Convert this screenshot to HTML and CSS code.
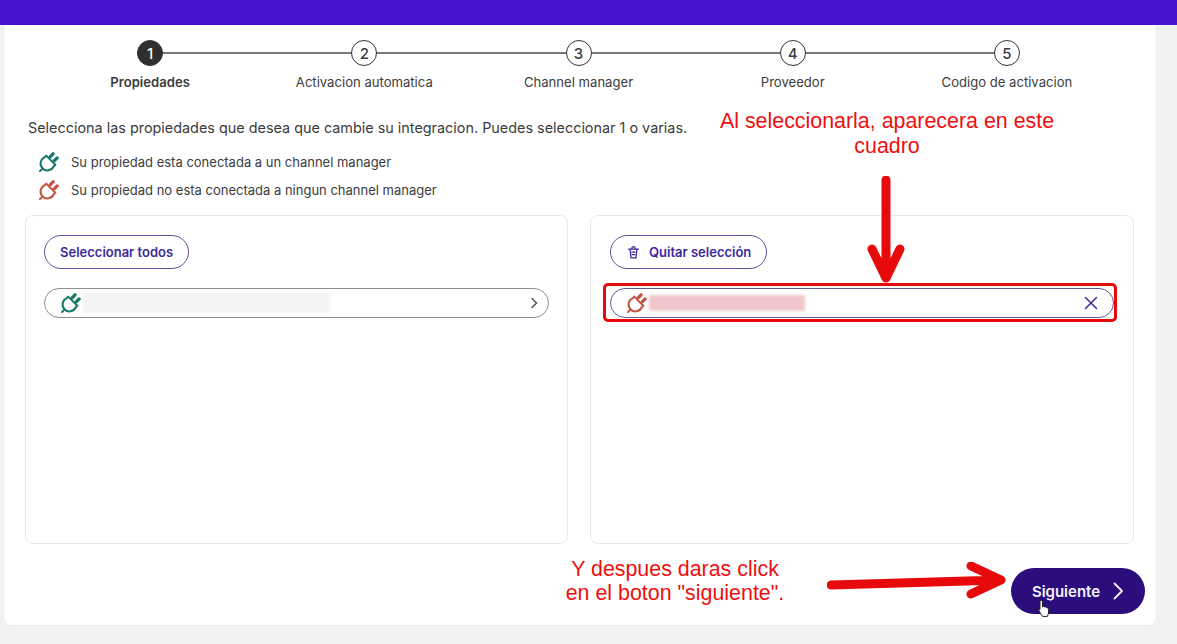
FILE: index.html
```html
<!DOCTYPE html>
<html lang="es">
<head>
<meta charset="utf-8">
<title>Propiedades</title>
<link rel="stylesheet" href="styles.css">
</head>
<body>
<svg class="defs" width="0" height="0" aria-hidden="true">
  <symbol id="plug" viewBox="1 1 22 22">
    <path d="M9 5 19 15 17 17A7.500 7.500 0 1 1 7 7Z"/>
    <path d="M5 19 2 22"/>
    <path class="prong" d="M13.500 6 16.500 3"/>
    <path class="prong" d="M18 10.500 21 7.500"/>
  </symbol>
</svg>
<header class="topbar"></header>
<main class="card">
  <ol class="steps">
    <li class="step active"><span class="dot">1</span><span class="label">Propiedades</span></li>
    <li class="step"><span class="dot">2</span><span class="label">Activacion automatica</span></li>
    <li class="step"><span class="dot">3</span><span class="label">Channel manager</span></li>
    <li class="step"><span class="dot">4</span><span class="label">Proveedor</span></li>
    <li class="step"><span class="dot">5</span><span class="label">Codigo de activacion</span></li>
  </ol>
  <p class="intro">Selecciona las propiedades que desea que cambie su integracion. Puedes seleccionar 1 o varias.</p>
  <ul class="legend">
    <li><svg class="plug green"><use href="#plug"/></svg>Su propiedad esta conectada a un channel manager</li>
    <li><svg class="plug red"><use href="#plug"/></svg>Su propiedad no esta conectada a ningun channel manager</li>
  </ul>
  <div class="panels">
    <section class="panel">
      <button class="outline">Seleccionar todos</button>
      <div class="row">
        <svg class="plug green"><use href="#plug"/></svg>
        <span class="redact gray"></span>
        <svg class="row-end" viewBox="0 0 12 12"><path d="M4 1.500 8.500 6 4 10.500"/></svg>
      </div>
    </section>
    <section class="panel">
      <button class="outline">
        <svg class="trash" viewBox="0 0 24 24"><path d="M4 6.500h16M6.500 6.500 8 20.500h8l1.500-14M9 6.500 10 3h4l1 3.500M9.500 11.500h5M10 15.500h4"/></svg>
        Quitar selección
      </button>
      <div class="row selected">
        <svg class="plug red"><use href="#plug"/></svg>
        <span class="redact pink"></span>
        <svg class="row-end close" viewBox="0 0 14 14"><path d="M1.500 1.500 12.500 12.500M12.500 1.500 1.500 12.500"/></svg>
      </div>
    </section>
  </div>
  <div class="actions">
    <button class="next">Siguiente
      <svg viewBox="0 0 12 18"><path d="M2.500 1.500 10 9l-7.500 7.500"/></svg>
    </button>
  </div>
</main>

<p class="note note-top">Al seleccionarla, aparecera en este<br>cuadro</p>
<p class="note note-bottom">Y despues daras click<br>en el boton "siguiente".</p>
<div class="highlight"></div>
<svg class="arrow arrow-down" viewBox="0 0 40 110"><path d="M19 4V102M5 73 19 102 33 73"/></svg>
<svg class="arrow arrow-right" viewBox="0 0 182 40"><path d="M4 23 174 18M144 4 174 18 144 32"/></svg>
<svg class="cursor" viewBox="0 0 14 20"><path d="M4 1.500c1 0 1.500.6 1.500 1.500v5l1-.5 1 .3 1 .2 1 .4 1.500.5.500 1.500v3.500l-1 3.500H5.500L2 12 1.500 10l1.500.5V3c0-1 .2-1.500 1-1.500Z"/></svg>
</body>
</html>
```
FILE: styles.css
```css
* { box-sizing: border-box; }
html, body { margin: 0; height: 644px; overflow: hidden; }
body {
  background: #f1f3f2;
  font-family: Inter, "Liberation Sans", sans-serif;
  color: #3c3c3c;
  position: relative;
}
.defs { position: absolute; }
.topbar { height: 25px; background: #4613d0; }
.card {
  width: 1154px;
  height: 601px;
  margin-left: 3px;
  background: #fff;
  border-radius: 0 0 8px 8px;
  border: 1px solid #eceeee;
  border-top: 0;
  padding: 15px 21px 0;
  display: flex;
  flex-direction: column;
}
.steps {
  list-style: none;
  margin: 0 21px 0 18px;
  padding: 0;
  display: flex;
}
.step {
  flex: 1;
  display: flex;
  flex-direction: column;
  align-items: center;
  position: relative;
  font-size: 13.100px;
}
.step:not(:last-child)::after {
  content: "";
  position: absolute;
  top: 12px;
  left: 50%;
  width: 100%;
  height: 2px;
  background: #777;
}
.dot {
  width: 26px;
  height: 26px;
  border-radius: 50%;
  border: 1.500px solid #333;
  background: #fff;
  display: flex;
  align-items: center;
  justify-content: center;
  font-size: 15px;
  font-weight: 500;
  position: relative;
  z-index: 1;
}
.active .dot { background: #2f2f2f; color: #fff; }
.label { margin-top: 8px; line-height: 16px; white-space: nowrap; }
.active .label { font-weight: 600; }
.intro { margin: 28px 0 0 3px; font-size: 14.400px; line-height: 20px; }
.legend {
  list-style: none;
  margin: 10px 0 0 14px;
  padding: 0;
  font-size: 13px;
}
.legend li { display: flex; align-items: center; gap: 12px; height: 28px; }
.plug {
  width: 20px;
  height: 20px;
  fill: none;
  stroke-width: 2.200;
  stroke-linecap: round;
  stroke-linejoin: round;
  flex: none;
}
.prong { stroke-width: 3.600; }
.green { stroke: #13796b; }
.red { stroke: #c5533f; }
.panels { display: grid; grid-template-columns: 543px 544px; gap: 22px; margin-top: 11px; }
.panel {
  height: 329px;
  border: 1px solid #e8e9ea;
  border-radius: 8px;
  padding: 19px 18px;
  display: flex;
  flex-direction: column;
  align-items: flex-start;
}
.panel + .panel { padding-left: 19px; }
.outline {
  height: 34px;
  padding: 0 15px;
  border: 1px solid #5d54a0;
  border-radius: 17px;
  background: #fff;
  color: #3d2a9a;
  font: 600 13px Inter, "Liberation Sans", sans-serif;
  display: flex;
  align-items: center;
  gap: 8px;
}
.trash {
  width: 15px;
  height: 15px;
  fill: none;
  stroke: #3d2a9a;
  stroke-width: 2;
  stroke-linecap: round;
  stroke-linejoin: round;
}
.row {
  width: 505px;
  height: 30px;
  margin-top: 19px;
  border: 1px solid #8d8d8f;
  border-radius: 15px;
  padding: 0 8px 0 16px;
  display: flex;
  align-items: center;
  gap: 2px;
}
.row.selected { width: 504px; border-color: #5d5a90; }
.redact { height: 20px; filter: blur(1.500px); }
.gray { width: 247px; background: #f3f3f3; }
.pink { width: 156px; height: 16px; background: #f0c6ca; }
.row-end {
  margin-left: auto;
  width: 12px;
  height: 12px;
  fill: none;
  stroke: #555;
  stroke-width: 1.500;
  stroke-linecap: round;
}
.close { width: 14px; height: 14px; stroke: #3d2a9a; margin-right: 7px; }
.actions { display: flex; justify-content: flex-end; margin: 24px -10px 0 0; }
.next {
  width: 134px;
  height: 46px;
  border: 0;
  border-radius: 23px;
  background: #2b0e7c;
  color: #f4f2fb;
  font: 600 15px Inter, "Liberation Sans", sans-serif;
  display: flex;
  align-items: center;
  justify-content: center;
  gap: 12px;
}
.next svg {
  width: 12px;
  height: 18px;
  fill: none;
  stroke: #f4f2fb;
  stroke-width: 1.800;
  stroke-linecap: round;
  stroke-linejoin: round;
}
.note {
  position: absolute;
  margin: 0;
  font-family: "Liberation Sans", sans-serif;
  color: #ee0f0f;
  text-align: center;
  white-space: nowrap;
  transform: translateX(-50%);
}
.note-top { left: 887px; top: 109px; font-size: 21.400px; line-height: 25px; }
.note-bottom { left: 675px; top: 557px; font-size: 21.400px; line-height: 24px; }
.highlight {
  position: absolute;
  left: 603px;
  top: 283px;
  width: 514px;
  height: 39px;
  border: 3px solid #e60a0a;
  border-radius: 5px;
}
.arrow {
  position: absolute;
  fill: none;
  stroke: #e60a0a;
  stroke-linecap: round;
  stroke-linejoin: round;
}
.arrow-down { left: 867px; top: 176px; width: 40px; height: 110px; stroke-width: 9; }
.arrow-right { left: 827px; top: 562px; width: 182px; height: 40px; stroke-width: 9; }
.cursor {
  position: absolute;
  left: 1037px;
  top: 599px;
  width: 14px;
  height: 20px;
  fill: #fff;
  stroke: #222;
  stroke-width: 1;
}
```
